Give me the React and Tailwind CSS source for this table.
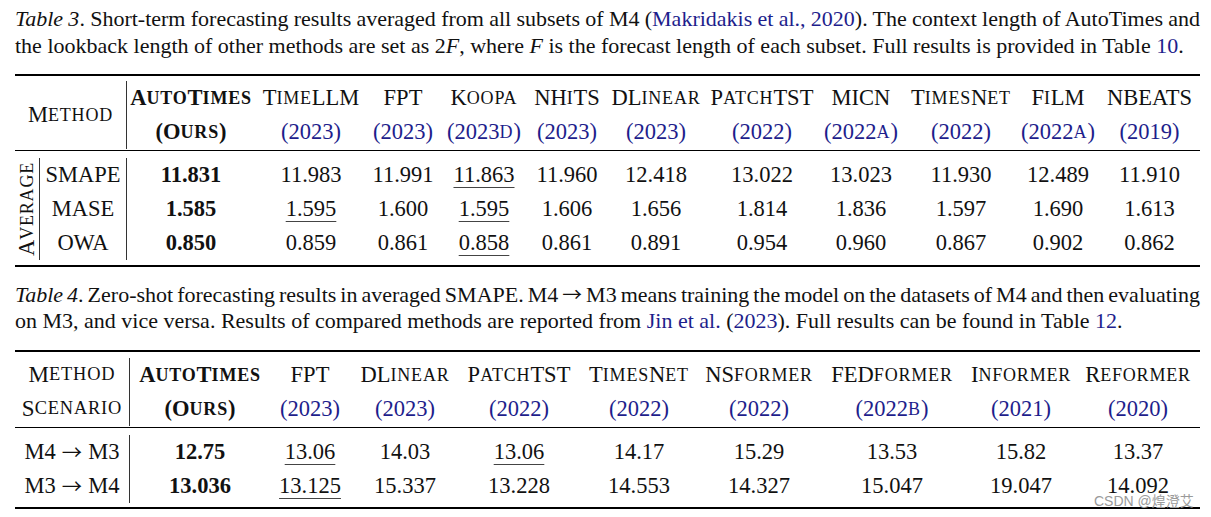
import React from "react";

function SC({ text }) {
  const parts = text.match(/[a-z]+|[^a-z]+/g) || [];
  return (
    <>
      {parts.map((p, i) =>
        /[a-z]/.test(p) ? (
          <span key={i} className="text-[0.8em] tracking-[0.045em]">
            {p.toUpperCase()}
          </span>
        ) : (
          <span key={i}>{p}</span>
        )
      )}
    </>
  );
}

const BLUE = "text-[#1e1e8c]";

function Arrow() {
  return (
    <span className="inline-block leading-none font-['Noto_Sans_CJK_SC','DejaVu_Sans',sans-serif] text-[0.9em] font-normal">
      {"\u2192"}
    </span>
  );
}

function Cell({ children, className = "" }) {
  return (
    <div className={"flex items-center justify-center whitespace-nowrap h-[34px] " + className}>
      {children}
    </div>
  );
}

function Val({ v }) {
  const [num, mode] = v.split("|");
  if (mode === "b") return <span className="font-bold">{num}</span>;
  if (mode === "u")
    return (
      <span className="underline decoration-1 underline-offset-[5px] decoration-[#444]">{num}</span>
    );
  return <span>{num}</span>;
}

const t3Heads = [
  ["AutoTimes", "(Ours)", true],
  ["TimeLLM", "(2023)"],
  ["FPT", "(2023)"],
  ["Koopa", "(2023d)"],
  ["NHiTS", "(2023)"],
  ["DLinear", "(2023)"],
  ["PatchTST", "(2022)"],
  ["MICN", "(2022a)"],
  ["TimesNet", "(2022)"],
  ["FiLM", "(2022a)"],
  ["NBEATS", "(2019)"],
];

const t3Rows = [
  ["SMAPE", ["11.831|b", "11.983", "11.991", "11.863|u", "11.960", "12.418", "13.022", "13.023", "11.930", "12.489", "11.910"]],
  ["MASE", ["1.585|b", "1.595|u", "1.600", "1.595|u", "1.606", "1.656", "1.814", "1.836", "1.597", "1.690", "1.613"]],
  ["OWA", ["0.850|b", "0.859", "0.861", "0.858|u", "0.861", "0.891", "0.954", "0.960", "0.867", "0.902", "0.862"]],
];

const t4Heads = [
  ["AutoTimes", "(Ours)", true],
  ["FPT", "(2023)"],
  ["DLinear", "(2023)"],
  ["PatchTST", "(2022)"],
  ["TimesNet", "(2022)"],
  ["NSformer", "(2022)"],
  ["FEDformer", "(2022b)"],
  ["Informer", "(2021)"],
  ["Reformer", "(2020)"],
];

const t4Rows = [
  [["M4", "M3"], ["12.75|b", "13.06|u", "14.03", "13.06|u", "14.17", "15.29", "13.53", "15.82", "13.37"]],
  [["M3", "M4"], ["13.036|b", "13.125|u", "15.337", "13.228", "14.553", "14.327", "15.047", "19.047", "14.092"]],
];

function HeadName({ h }) {
  return (
    <Cell className={h[2] ? "font-bold" : ""}>
      <SC text={h[0]} />
    </Cell>
  );
}

function HeadYear({ h }) {
  return (
    <Cell className={h[2] ? "font-bold" : BLUE}>
      <SC text={h[1]} />
    </Cell>
  );
}

export default function App() {
  return (
    <div className="relative w-[1211px] h-[517px] bg-white text-[#111] font-['Liberation_Serif',serif] text-[22.5px] overflow-hidden">
      <div className="pl-[15px] pr-[11px]">
        {/* Caption 3 */}
        <div className="pt-[5px] leading-[27px] text-[22px]">
          <div className="text-justify [text-align-last:justify] whitespace-nowrap [word-spacing:-1px]">
            <i>Table 3</i>. Short-term forecasting results averaged from all subsets of M4 (
            <span className={BLUE}>Makridakis et al., 2020</span>). The context length of AutoTimes and
          </div>
          <div className="whitespace-nowrap">
            the lookback length of other methods are set as 2<i>F</i>, where <i>F</i> is the forecast length of
            each subset. Full results is provided in Table <span className={BLUE}>10</span>.
          </div>
        </div>

        {/* Table 3 */}
        <div className="mt-[15px]">
          <div className="h-[2px] bg-black" />
          <div className="grid grid-cols-[112px_128px_112px_72px_90px_76px_102px_110px_88px_112px_82px_101px] grid-rows-[34px_34px] pt-[5px] h-[74px]">
            <div className="row-span-2 border-r border-[#333] flex items-center justify-center">
              <SC text="Method" />
            </div>
            {t3Heads.map((h, i) => (
              <HeadName key={"n" + i} h={h} />
            ))}
            {t3Heads.map((h, i) => (
              <HeadYear key={"y" + i} h={h} />
            ))}
          </div>
          <div className="h-px bg-black" />
          <div className="grid grid-cols-[25px_87px_128px_112px_72px_90px_76px_102px_110px_88px_112px_82px_101px] grid-rows-[34px_34px_34px] pt-[7px] pb-[5px] h-[114px]">
            <div className="row-span-3 border-r border-[#333] flex items-center justify-center">
              <span className="[writing-mode:vertical-rl] rotate-180 whitespace-nowrap leading-none">
                <SC text="Average" />
              </span>
            </div>
            {t3Rows.map(([m, vals], ri) => (
              <React.Fragment key={ri}>
                <Cell className="border-r border-[#333] col-start-2">{m}</Cell>
                {vals.map((v, i) => (
                  <Cell key={i}>
                    <Val v={v} />
                  </Cell>
                ))}
              </React.Fragment>
            ))}
          </div>
          <div className="h-[2px] bg-black" />
        </div>

        {/* Caption 4 */}
        <div className="mt-[15px] leading-[26px] text-[22px]">
          <div className="text-justify [text-align-last:justify] whitespace-nowrap [word-spacing:-2.5px]">
            <i>Table 4</i>. Zero-shot forecasting results in averaged SMAPE. M4 <Arrow /> M3 means training the
            model on the datasets of M4 and then evaluating
          </div>
          <div className="whitespace-nowrap">
            on M3, and vice versa. Results of compared methods are reported from{" "}
            <span className={BLUE}>Jin et al.</span> (<span className={BLUE}>2023</span>). Full results can be
            found in Table <span className={BLUE}>12</span>.
          </div>
        </div>

        {/* Table 4 */}
        <div className="mt-[16px]">
          <div className="h-[2px] bg-black" />
          <div className="grid grid-cols-[115px_140px_80px_110px_118px_122px_118px_148px_110px_124px] grid-rows-[34px_34px] pt-[6px] h-[75px]">
            <Cell className="border-r border-[#333] text-[23px]">
              <SC text="Method" />
            </Cell>
            {t4Heads.map((h, i) => (
              <HeadName key={"n" + i} h={h} />
            ))}
            <Cell className="border-r border-[#333] text-[23px]">
              <SC text="Scenario" />
            </Cell>
            {t4Heads.map((h, i) => (
              <HeadYear key={"y" + i} h={h} />
            ))}
          </div>
          <div className="h-px bg-black" />
          <div className="grid grid-cols-[115px_140px_80px_110px_118px_122px_118px_148px_110px_124px] grid-rows-[34px_34px] pt-[7px] pb-[4px] h-[79px]">
            {t4Rows.map(([m, vals], ri) => (
              <React.Fragment key={ri}>
                <Cell className="border-r border-[#333] gap-[6px]">
                  <span>{m[0]}</span>
                  <Arrow />
                  <span>{m[1]}</span>
                </Cell>
                {vals.map((v, i) => (
                  <Cell key={i}>
                    <Val v={v} />
                  </Cell>
                ))}
              </React.Fragment>
            ))}
          </div>
          <div className="h-[2px] bg-black" />
        </div>
      </div>

      <div className="absolute left-[1094px] top-[492px] text-[14px] leading-[18px] text-[#9a9a9a] font-['Liberation_Sans','Noto_Sans_CJK_SC',sans-serif] whitespace-nowrap">
        CSDN @煌澄艾
      </div>
    </div>
  );
}
